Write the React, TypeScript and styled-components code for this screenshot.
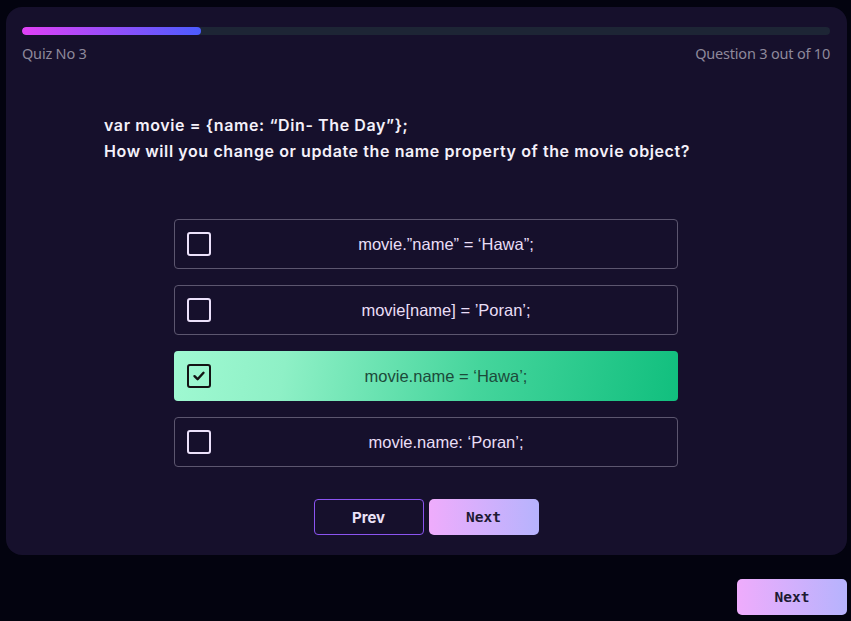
import React from "react";
import styled, { createGlobalStyle } from "styled-components";

const Global = createGlobalStyle`
  html, body { margin: 0; padding: 0; background: #03030f; }
  body { font-family: "Liberation Sans", Arial, sans-serif; }
  * { box-sizing: border-box; }
`;

const Page = styled.div`
  width: 851px;
  min-height: 621px;
  padding: 7px 4px 0 6px;
  display: flex;
  flex-direction: column;
  align-items: stretch;
`;

const Card = styled.div`
  background: #16102c;
  border-radius: 16px;
  padding: 20px 17px 20px 16px;
  display: flex;
  flex-direction: column;
`;

const Track = styled.div`
  height: 8px;
  border-radius: 4px;
  background: #1d2535;
  overflow: hidden;
`;

const Fill = styled.div`
  height: 100%;
  border-radius: 4px;
  background: linear-gradient(90deg, #e040f5 0%, #4b5cff 100%);
`;

const Meta = styled.div`
  display: flex;
  justify-content: space-between;
  margin-top: 9px;
  font-family: "Noto Sans", "Open Sans", sans-serif;
  font-size: 14.5px;
  line-height: 18px;
  color: #8e899b;
  letter-spacing: -0.2px;
`;

const Question = styled.div`
  margin: 50px 0 0 82px;
  font-family: "Inter", "Noto Sans", sans-serif;
  font-weight: 600;
  font-size: 16px;
  line-height: 26px;
  letter-spacing: 0.6px;
  color: #f4f1fa;
`;

const Options = styled.div`
  width: 504px;
  align-self: center;
  margin-top: 55px;
  display: flex;
  flex-direction: column;
  gap: 16px;
`;

const Option = styled.div<{ $selected?: boolean }>`
  height: 50px;
  border-radius: 4px;
  display: flex;
  align-items: center;
  padding: 0 0 0 12px;
  border: 1px solid ${(p) => (p.$selected ? "transparent" : "#5c566f")};
  background-origin: border-box;
  background-image: ${(p) =>
    p.$selected
      ? "linear-gradient(100deg, #a0f9d2 0%, #8ef0c6 22%, #45d59c 60%, #11bf7e 100%)"
      : "none"};
`;

const Box = styled.div<{ $selected?: boolean }>`
  width: 24px;
  height: 24px;
  flex: none;
  border-radius: 3px;
  border: 2px solid ${(p) => (p.$selected ? "#131313" : "#ece1fb")};
  display: flex;
  align-items: center;
  justify-content: center;
`;

const OptionText = styled.div<{ $selected?: boolean }>`
  flex: 1;
  padding-left: 4px;
  text-align: center;
  font-size: 16.5px;
  color: ${(p) => (p.$selected ? "#1c4a3a" : "#e9def6")};
`;

const Nav = styled.div`
  align-self: center;
  display: flex;
  gap: 5px;
  margin-top: 32px;
`;

const PrevButton = styled.button`
  width: 110px;
  height: 36px;
  border: 1px solid #8b54f0;
  border-radius: 4px;
  background: transparent;
  color: #ebe2f7;
  font-family: "Inter", "Liberation Sans", sans-serif;
  font-weight: 700;
  font-size: 15px;
  cursor: pointer;
`;

const NextButton = styled.button`
  width: 110px;
  height: 36px;
  border: none;
  border-radius: 5px;
  background: linear-gradient(90deg, #efacfc 0%, #b6b3fd 100%);
  color: #1d1a33;
  font-family: "DejaVu Sans Mono", "Liberation Mono", monospace;
  font-weight: 700;
  font-size: 14.5px;
  cursor: pointer;
`;

const Footer = styled.div`
  display: flex;
  justify-content: flex-end;
  margin-top: 24px;
`;

const options = [
  { text: "movie.\u201dname\u201d = \u2018Hawa\u201d;", selected: false },
  { text: "movie[name] = \u2019Poran\u2019;", selected: false },
  { text: "movie.name = \u2018Hawa\u2019;", selected: true },
  { text: "movie.name: \u2018Poran\u2019;", selected: false },
];

export default function App() {
  const progress = 179 / 808;
  return (
    <Page>
      <Global />
      <Card>
        <Track>
          <Fill style={{ width: `${progress * 100}%` }} />
        </Track>
        <Meta>
          <span>Quiz No 3</span>
          <span>Question 3 out of 10</span>
        </Meta>
        <Question>
          var movie = {"{"}name: {"\u201cDin- The Day\u201d"}{"}"};
          <br />
          How will you change or update the name property of the movie object?
        </Question>
        <Options>
          {options.map((o, i) => (
            <Option key={i} $selected={o.selected}>
              <Box $selected={o.selected}>
                {o.selected && (
                  <svg width="14" height="14" viewBox="0 0 14 14">
                    <path
                      d="M2.5 7.2 L5.6 10.2 L11.5 3.8"
                      fill="none"
                      stroke="#131313"
                      strokeWidth="2.4"
                      strokeLinecap="round"
                      strokeLinejoin="round"
                    />
                  </svg>
                )}
              </Box>
              <OptionText $selected={o.selected}>{o.text}</OptionText>
            </Option>
          ))}
        </Options>
        <Nav>
          <PrevButton>Prev</PrevButton>
          <NextButton>Next</NextButton>
        </Nav>
      </Card>
      <Footer>
        <NextButton>Next</NextButton>
      </Footer>
    </Page>
  );
}
